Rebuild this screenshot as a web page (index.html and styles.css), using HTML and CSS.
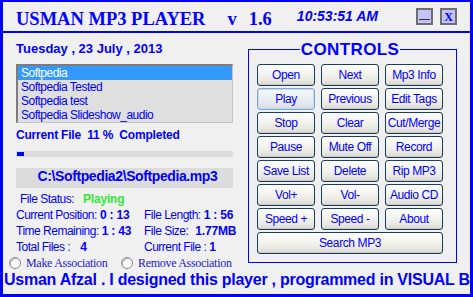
FILE: index.html
```html
<!DOCTYPE html>
<html lang="en">
  <head>
    <meta charset="UTF-8" />
    <title>Usman MP3 Player</title>
    <link rel="stylesheet" href="styles.css">
  </head>
  <body>
    <div class="window">
      <header class="titlebar">
        <h1 class="app-title">USMAN MP3 PLAYER</h1>
        <span class="version">v<span class="version-num">1.6</span></span>
        <span class="clock">10:53:51 AM</span>
        <button class="win-btn min-btn"><span class="min-line"></span></button>
        <button class="win-btn close-btn">X</button>
      </header>
      <main class="main">
        <section class="left">
          <p class="date">Tuesday , 23 July , 2013</p>
          <ul class="playlist">
            <li class="selected">Softpedia</li>
            <li>Softpedia Tested</li>
            <li>Softpedia test</li>
            <li>Softpedia Slideshow_audio</li>
          </ul>
          <p class="progress-text">Current File&nbsp; 11 %&nbsp; Completed</p>
          <div class="progress"><div class="progress-fill" style="width: 7px"></div></div>
          <div class="path">C:\Softpedia2\Softpedia.mp3</div>
          <div class="info">
            <div class="cell status">File Status:<b class="val playing">Playing</b></div>
            <div class="cell"></div>
            <div class="cell">Current Position:<b class="val">0 : 13</b></div>
            <div class="cell">File Length:<b class="val">1 : 56</b></div>
            <div class="cell">Time Remaining:<b class="val">1 : 43</b></div>
            <div class="cell">File Size:<b class="val gap-m">1.77MB</b></div>
            <div class="cell">Total Files :<b class="val gap-l">4</b></div>
            <div class="cell">Current File :<b class="val">1</b></div>
          </div>
          <div class="assoc">
            <label class="assoc-item"><span class="radio"></span>Make Association</label>
            <label class="assoc-item"><span class="radio"></span>Remove Association</label>
          </div>
        </section>
        <fieldset class="controls">
          <legend>CONTROLS</legend>
          <div class="btn-grid">
            <button class="ctl">Open</button>
            <button class="ctl">Next</button>
            <button class="ctl">Mp3 Info</button>
            <button class="ctl is-focus">Play</button>
            <button class="ctl">Previous</button>
            <button class="ctl">Edit Tags</button>
            <button class="ctl">Stop</button>
            <button class="ctl">Clear</button>
            <button class="ctl">Cut/Merge</button>
            <button class="ctl">Pause</button>
            <button class="ctl">Mute Off</button>
            <button class="ctl">Record</button>
            <button class="ctl">Save List</button>
            <button class="ctl">Delete</button>
            <button class="ctl">Rip MP3</button>
            <button class="ctl">Vol+</button>
            <button class="ctl">Vol-</button>
            <button class="ctl">Audio CD</button>
            <button class="ctl">Speed +</button>
            <button class="ctl">Speed -</button>
            <button class="ctl">About</button>
            <button class="ctl wide">Search MP3</button>
          </div>
        </fieldset>
      </main>
      <div class="marquee">Usman Afzal . I designed this player , programmed in VISUAL Basic 6.0</div>
    </div>
  </body>
</html>
```

FILE: styles.css
```css
* {
  box-sizing: border-box;
  margin: 0;
  padding: 0;
}
body {
  background: #f0f0f0;
  font-family: "Liberation Sans", Arial, sans-serif;
  color: #0000ff;
}
.window {
  width: 473px;
  height: 297px;
  border: 3px solid #0000ff;
  border-top-width: 2px;
  display: flex;
  flex-direction: column;
  overflow: hidden;
}
.titlebar {
  height: 31px;
  flex-shrink: 0;
  border-bottom: 2px solid #0000ff;
  display: flex;
  align-items: flex-start;
  padding: 6px 13px 0 13px;
}
.app-title {
  font: bold 18.5px/20px "Liberation Serif", "Times New Roman", serif;
  margin-top: 1px;
}
.version {
  font: bold 18.5px/20px "Liberation Serif", "Times New Roman", serif;
  margin: 1px 0 0 22px;
}
.version-num {
  margin-left: 12px;
}
.clock {
  font: italic bold 14px/16px "Liberation Sans", Arial, sans-serif;
  margin-left: 25px;
}
.win-btn {
  width: 17px;
  height: 17px;
  border: 2px solid #6e6e6e;
  background: #c2c2ff;
  display: flex;
  justify-content: center;
}
.min-btn {
  margin-left: auto;
  align-items: flex-end;
  padding-bottom: 3px;
}
.min-line {
  width: 11px;
  height: 1px;
  background: #4a2a10;
}
.close-btn {
  margin-left: 7px;
  align-items: center;
  font: bold 12px/12px "Liberation Serif", "Times New Roman", serif;
  color: #0000ff;
}
.main {
  display: flex;
  align-items: flex-start;
}
.left {
  width: 230px;
  padding-left: 13px;
  display: flex;
  flex-direction: column;
}
.date {
  font-size: 13px;
  line-height: 15px;
  font-weight: bold;
  margin-top: 8px;
}
.playlist {
  list-style: none;
  margin-top: 8px;
  width: 217px;
  height: 59px;
  background: #dfdfdf;
  border-top: 2px solid #7c7c7c;
  border-left: 2px solid #7c7c7c;
  border-right: 1px solid #c4c4c4;
  border-bottom: 1px solid #c4c4c4;
  font-size: 12px;
  line-height: 14px;
  letter-spacing: -0.5px;
}
.playlist li {
  height: 14px;
  padding-left: 3px;
  white-space: nowrap;
}
.playlist .selected {
  background: #3399ff;
  color: #fff;
}
.progress-text {
  font-size: 12px;
  line-height: 14px;
  font-weight: bold;
  letter-spacing: -0.2px;
  margin-top: 5px;
}
.progress {
  margin-top: 9px;
  width: 217px;
  height: 6px;
  padding: 1px;
  background: #dcdcdc;
}
.progress-fill {
  height: 4px;
  background: #0000ff;
}
.path {
  margin-top: 11px;
  width: 217px;
  height: 20px;
  padding-left: 6px;
  background: #dcdcdc;
  font-size: 14px;
  line-height: 17px;
  font-weight: bold;
  letter-spacing: -0.4px;
  text-align: center;
}
.info {
  display: grid;
  grid-template-columns: 128px 1fr;
  grid-auto-rows: 16px;
  margin-top: 3px;
  font-size: 12px;
  line-height: 16px;
  letter-spacing: -0.5px;
  white-space: nowrap;
}
.status {
  padding-left: 4px;
}
.val {
  margin-left: 3px;
  letter-spacing: -0.2px;
}
.playing {
  margin-left: 9px;
  color: #33e833;
}
.gap-m {
  margin-left: 7px;
}
.gap-l {
  margin-left: 10px;
}
.assoc {
  display: flex;
  margin: 1px 0 0 -7px;
  height: 14px;
  font: 12px/14px "Liberation Serif", "Times New Roman", serif;
  letter-spacing: -0.3px;
  color: #1a1ad0;
}
.assoc-item {
  display: flex;
  align-items: center;
  width: 112px;
  white-space: nowrap;
}
.radio {
  width: 12px;
  height: 12px;
  margin-right: 5px;
  border-radius: 50%;
  border: 1px solid #8a8a8a;
  background: #fafafa;
  box-shadow: inset 1px 1px 1px #b8b8b8;
}
.controls {
  margin: 7px 0 0 15px;
  width: 209px;
  min-width: 0;
  border: 1px solid #0000ff;
  padding: 5px 13px 8px 8px;
}
.controls legend {
  margin: 0 auto;
  padding: 0 1px;
  font-size: 17px;
  line-height: 19px;
  font-weight: bold;
  letter-spacing: 0.4px;
}
.btn-grid {
  display: grid;
  grid-template-columns: repeat(3, 58px);
  grid-auto-rows: 22px;
  column-gap: 6px;
  row-gap: 2px;
}
.ctl {
  font-family: "Liberation Sans", Arial, sans-serif;
  font-size: 12px;
  letter-spacing: -0.4px;
  color: #0000ff;
  border: 1px solid #1b3f5e;
  border-radius: 3px;
  background: linear-gradient(#fdfdfb, #f1f1ec 55%, #dedcd4);
  box-shadow: inset 0 -1px 0 #c9c7bf;
  padding: 0;
}
.ctl.is-focus {
  border-color: #7ea8d4;
  background: linear-gradient(#f6f9fc, #e8edf2 55%, #d8dde4);
  box-shadow: inset 0 0 0 1px #c4d8ee;
}
.wide {
  grid-column: 1 / -1;
}
.marquee {
  margin-top: 1px;
  padding-left: 1px;
  font-size: 16px;
  line-height: 18px;
  font-weight: bold;
  letter-spacing: -0.25px;
  white-space: nowrap;
  overflow: hidden;
}
```
